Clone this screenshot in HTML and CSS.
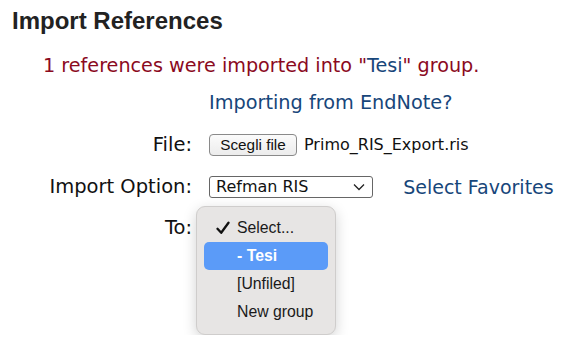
FILE: index.html
```html
<!DOCTYPE html>
<html lang="en">
<head>
  <meta charset="UTF-8" />
  <title>Import References</title>
  <link rel="stylesheet" href="styles.css">
</head>
<body>

<h2 class="title">Import References</h2>
<p class="message">1 references were imported into "<span class="group">Tesi</span>" group.</p>

<table class="form">
  <tr>
    <td></td>
    <td><a class="link" href="#">Importing from EndNote?</a></td>
  </tr>
  <tr>
    <td class="label">File:</td>
    <td><span class="filebtn">Scegli file</span><span class="filename">Primo_RIS_Export.ris</span></td>
  </tr>
  <tr>
    <td class="label">Import Option:</td>
    <td>
      <span class="select">Refman RIS
        <svg class="chev" width="12" height="8" viewBox="0 0 12 8"><path d="M1 1.5 L6 6.5 L11 1.5" fill="none" stroke="#222" stroke-width="1.3"/></svg>
      </span>
      <a class="link fav" href="#">Select Favorites</a>
    </td>
  </tr>
  <tr class="to-row">
    <td class="label">To:</td>
    <td>
      <div class="popup">
        <div class="opt"><span class="mark"><svg width="14" height="14" viewBox="0 0 14 14"><path d="M1.5 7.8 L5.2 11.8 L12.5 1.8" fill="none" stroke="#111" stroke-width="2.3" stroke-linecap="round" stroke-linejoin="round"/></svg></span>Select...</div>
        <div class="opt active"><span class="mark"></span>- Tesi</div>
        <div class="opt"><span class="mark"></span>[Unfiled]</div>
        <div class="opt"><span class="mark"></span>New group</div>
      </div>
    </td>
  </tr>
</table>

</body>
</html>
```

FILE: styles.css
```css
body {
  margin: 0;
  padding: 0 12px;
  font-family: "DejaVu Sans", Verdana, sans-serif;
  font-size: 19.5px;
  color: #111;
  background: #fff;
}
.title {
  font-family: "Liberation Sans", Arial, sans-serif;
  font-size: 24px;
  font-weight: bold;
  color: #222;
  margin: 7px 0 0;
}
.message {
  color: #8b0a1e;
  margin: 19px 0 0 31px;
  font-size: 19.2px;
}
.group { color: #17467a; }
.form {
  border-collapse: collapse;
  margin-top: 4px;
}
.form td {
  padding: 0;
  height: 42px;
  vertical-align: middle;
  white-space: nowrap;
}
.form td.label {
  text-align: right;
  width: 180px;
  padding-right: 17px;
}
.link {
  color: #17467a;
  text-decoration: none;
  font-size: 19.3px;
}
.filebtn {
  display: inline-block;
  box-sizing: border-box;
  width: 88px;
  height: 22px;
  line-height: 20px;
  text-align: center;
  font-family: "Liberation Sans", Arial, sans-serif;
  font-size: 15.3px;
  border: 1px solid #8a8a8a;
  border-radius: 4px;
  background: linear-gradient(#fbfbfb, #ececec);
  color: #111;
  vertical-align: middle;
}
.filename {
  margin-left: 7px;
  font-size: 16px;
  vertical-align: middle;
}
.select {
  display: inline-flex;
  box-sizing: border-box;
  align-items: center;
  justify-content: space-between;
  width: 164px;
  height: 22px;
  padding: 0 7px 0 6px;
  border: 1px solid #666;
  border-radius: 3px;
  font-size: 16px;
  vertical-align: middle;
}
.fav { margin-left: 24px; vertical-align: middle; font-size: 19px; }
.to-row td { vertical-align: top; }
.to-row td.label { line-height: 42px; }
.popup {
  width: 124px;
  margin: -1px 0 0 -13px;
  padding: 7px 7px 8px;
  background: #e7e5e4;
  border: 1px solid #cfcdcc;
  border-radius: 9px;
  box-shadow: 0 4px 14px rgba(0,0,0,0.18);
  font-family: "Liberation Sans", Arial, sans-serif;
  font-size: 15.8px;
  color: #1a1a1a;
}
.opt {
  display: flex;
  align-items: center;
  height: 28px;
  border-radius: 5px;
}
.mark {
  display: flex;
  width: 33px;
  padding-left: 12px;
  box-sizing: border-box;
}
.opt.active {
  background: #5b9bf8;
  color: #fff;
  font-weight: bold;
}
```
